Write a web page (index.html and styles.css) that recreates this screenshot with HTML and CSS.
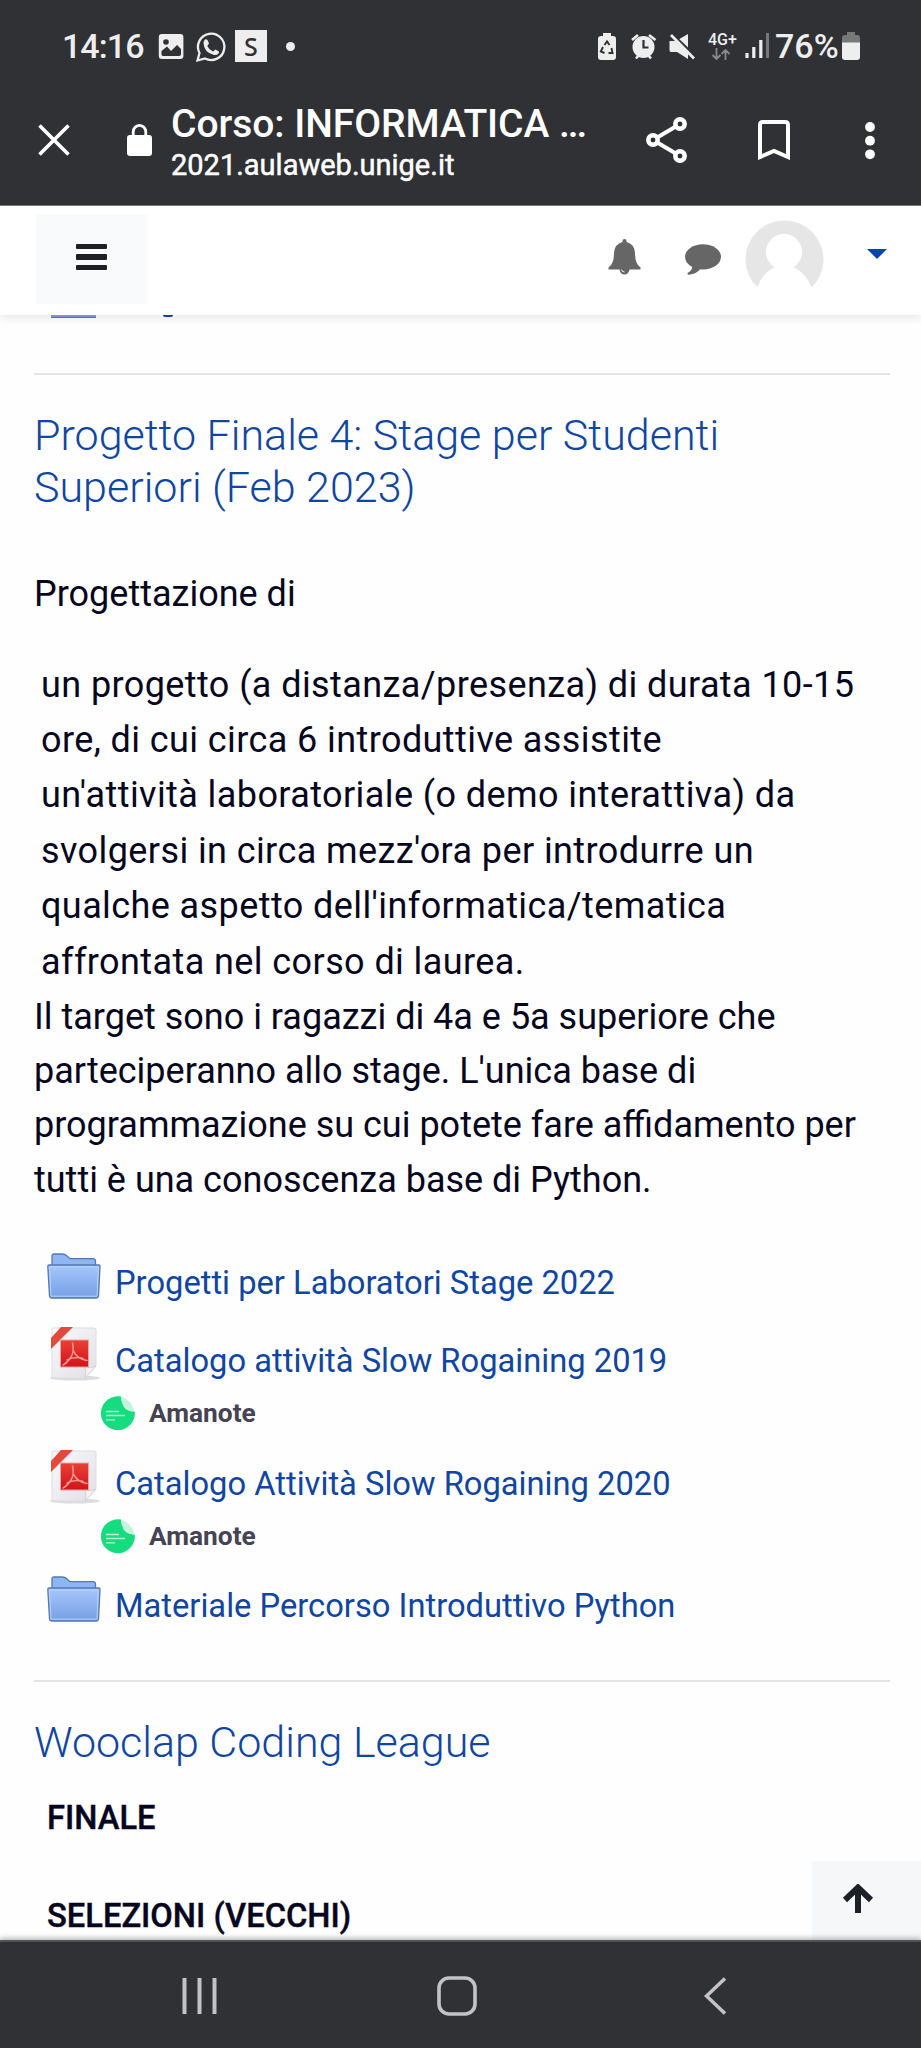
FILE: index.html
```html
<!DOCTYPE html>
<html lang="it">
<head>
<meta charset="utf-8">
<title>Corso: INFORMATICA</title>
<link rel="stylesheet" href="styles.css">
</head>
<body>
<svg class="defs" width="0" height="0" aria-hidden="true">
  <defs>
    <linearGradient id="fb" x1="0" y1="0" x2="0" y2="1"><stop offset="0" stop-color="#a6c7fa"/><stop offset="1" stop-color="#769fe6"/></linearGradient>
    <linearGradient id="pg" x1="0" y1="0" x2="1" y2="1"><stop offset="0" stop-color="#fafafc"/><stop offset="1" stop-color="#dfdfe6"/></linearGradient>
    <linearGradient id="rd" x1="0" y1="0" x2="0" y2="1"><stop offset="0" stop-color="#ea4034"/><stop offset="1" stop-color="#d0131c"/></linearGradient>
    <symbol id="folder" viewBox="0 0 54 46">
      <path d="M5 15V3Q5 1 7 1H15Q18 1 20 3L23 5.700H46Q48.500 6 48.500 8V15Z" fill="#8fb5f2" stroke="#5578b5" stroke-width="1.300"/>
      <path d="M2 12H52Q53 12 53 13.500L51.500 43Q51.300 45 49.500 45H4.500Q2.700 45 2.500 43L.8 13.500Q.8 12 2 12Z" fill="url(#fb)" stroke="#5578b5" stroke-width="1.300"/>
      <path d="M2.500 14H51.300L50 43.200H4Z" fill="none" stroke="#b9d2fb" stroke-width="1"/>
    </symbol>
    <symbol id="pdf" viewBox="0 0 52 54">
      <ellipse cx="26" cy="51" rx="25" ry="2.600" fill="#dcdcdf"/>
      <path d="M3 2Q3 1 5 1H45Q47 1 47 3V39L36 51H5Q3 51 3 49Z" fill="url(#pg)" stroke="#dddde3" stroke-width="1"/>
      <path d="M47 39L36 51Q38 44 36 40Q42 42 47 39Z" fill="#f4f4f5" stroke="#cbcbd0" stroke-width=".8"/>
      <path d="M12 0H24L2 22V11Z" fill="#e24a3d"/>
      <rect x="11.500" y="13" width="28" height="27" fill="url(#rd)" stroke="#eca49d" stroke-width="1"/>
      <path d="M23.500 16Q25.500 25 22 30Q18 36 14 38M24.500 24Q28 32 38 33.500M18 33Q26 29 34 31.500" fill="none" stroke="#f79a92" stroke-width="1.500" stroke-linecap="round"/>
    </symbol>
    <symbol id="amanote" viewBox="0 0 34 34">
      <path d="M20 .5A17 17 0 1 0 33.800 15.500Q21 16 20 .5Z" fill="#14dc7f"/>
      <path d="M20.500 .5Q30 4 33.800 15.500Q21 15 20.500 .5Z" fill="#c2f5dc"/>
      <path d="M5 15.500H18M5 19.500H24M5 23.800H14" stroke="#b4f5d5" stroke-width="1.300"/>
    </symbol>
  </defs>
</svg>

<header class="system">
  <div class="status">
    <span class="clock">14:16</span>
    <svg class="st-left" width="78" height="40" viewBox="150 26 78 40">
      <rect x="158.800" y="34" width="24.600" height="25" rx="3" fill="#eeeeee"/>
      <circle cx="166" cy="42" r="2.800" fill="#303134"/>
      <path d="M161.500 54V51L167 46.500L171 51L177 45L181 49V54Q181 56 179 56H163Q161.500 56 161.500 54Z" fill="#303134"/>
      <path d="M197.500 60.500L199.500 53A13.200 13.200 0 1 1 205 58.500Z" fill="none" stroke="#eeeeee" stroke-width="2.300"/>
      <path d="M205 39.500Q207 38.500 208 41L209 43.500L207.300 46Q209 50 213 51.500L215.500 49.500L219 51.500Q219 55.500 214 55Q204 52.500 203.500 43Q203.700 40.500 205 39.500Z" fill="#eeeeee"/>
    </svg>
    <span class="s-app">S</span>
    <i class="dot"></i>
    <svg class="st-right" width="106" height="40" viewBox="594 26 106 40">
      <path d="M603 33H611V36H613Q616 36 616 39V57Q616 60 613 60H601Q598 60 598 57V39Q598 36 601 36H603Z" fill="#eeeeee"/>
      <path d="M604.500 45L607 41.500L609.500 45M603 47L600.800 51.500L604.500 53M608.500 53H612.500L611.500 48" fill="none" stroke="#303134" stroke-width="1.900"/>
      <circle cx="643.500" cy="47" r="11" fill="#eeeeee"/>
      <path d="M632 40L638 35M649 35L655.500 40M636 58.500L639 55M651 58.500L648 55" stroke="#eeeeee" stroke-width="2.600"/>
      <path d="M643.500 40V47.500H648.500" fill="none" stroke="#303134" stroke-width="2.200"/>
      <path d="M669.500 41H676L688 34V59L677 52H671Q669.500 52 669.500 50Z" fill="#eeeeee"/>
      <path d="M670 33L695 57" stroke="#303134" stroke-width="4"/>
      <path d="M671 35L694 58.500" stroke="#eeeeee" stroke-width="2.700"/>
    </svg>
    <span class="net"><b>4G+</b>
      <svg width="20" height="13" viewBox="0 0 20 13"><path d="M5.500 0V11M1.500 7L5.500 11L9.500 7M14.500 12V2M10.500 6L14.500 2L18.500 6" fill="none" stroke="#8a8a8c" stroke-width="1.800"/></svg>
    </span>
    <svg class="signal" width="26" height="28" viewBox="744 32 26 28"><path d="M747 53V58M753.800 47V58M760.800 40V58" stroke="#eeeeee" stroke-width="3.200"/><path d="M767.500 33V58" stroke="#77787a" stroke-width="3"/></svg>
    <span class="pct">76%</span>
    <svg class="batt" width="18" height="28" viewBox="0 0 18 28"><path d="M5 0H13V3H15Q18 3 18 6V12H0V6Q0 3 3 3H5Z" fill="#77787a"/><path d="M0 10.500H18V25Q18 28 15 28H3Q0 28 0 25Z" fill="#eeeeee"/></svg>
  </div>
  <div class="browser">
    <svg class="close" width="32" height="32" viewBox="0 0 32 32"><path d="M1.500 1.500L30.500 30.500M30.500 1.500L1.500 30.500" stroke="#fff" stroke-width="3.600"/></svg>
    <svg class="lock" width="25" height="32" viewBox="0 0 25 32"><path d="M6.200 12V8A6.200 6.500 0 0 1 18.800 8V12" fill="none" stroke="#fff" stroke-width="2.800"/><rect y="11" width="25" height="21" rx="3" fill="#fff"/></svg>
    <div class="page-id">
      <div class="page-title">Corso: INFORMATICA <span class="ell">...</span></div>
      <div class="page-host">2021.aulaweb.unige.it</div>
    </div>
    <svg class="share" width="42" height="46" viewBox="0 0 42 46"><path d="M34 7L7 23L34 39" fill="none" stroke="#fff" stroke-width="4"/><g fill="#303134" stroke="#fff" stroke-width="4.500"><circle cx="34" cy="7" r="4.700"/><circle cx="7" cy="23" r="4.700"/><circle cx="34" cy="39" r="4.700"/></g></svg>
    <svg class="mark" width="32" height="40" viewBox="0 0 32 40"><path d="M2 37V5Q2 2 5 2H27Q30 2 30 5V37L16 31Z" fill="none" stroke="#fff" stroke-width="4"/></svg>
    <svg class="more" width="10" height="38" viewBox="0 0 10 38"><g fill="#fff"><circle cx="5" cy="5" r="4.900"/><circle cx="5" cy="18.700" r="4.900"/><circle cx="5" cy="32.300" r="4.900"/></g></svg>
  </div>
</header>

<nav class="site-nav">
  <div class="burger"><i></i><i></i><i></i></div>
  <svg class="bell" width="33" height="36" viewBox="0 0 33 36"><path d="M14.500 3V2A2 2 0 0 1 18.500 2V3Q26.500 5 27 14Q27 25 32.500 28.500V30.500H.5V28.500Q6 25 6 14Q6.500 5 14.500 3Z" fill="#666"/><path d="M11.500 30H21.500A5 5.500 0 0 1 11.500 30Z" fill="#666"/><path d="M13.500 30.500Q14 33 16.500 33" fill="none" stroke="#fff" stroke-width="1"/></svg>
  <svg class="chat" width="36" height="31" viewBox="0 0 36 31"><ellipse cx="18" cy="12.800" rx="18" ry="12.600" fill="#666"/><path d="M7 22Q8 26 2.500 29Q2 31 4 30.800Q12 30 16 24Z" fill="#666"/></svg>
  <svg class="avatar" width="79" height="69" viewBox="0 0 79 69"><path d="M13 69A39 39 0 1 1 66 69Z" fill="#e6e6e6"/><circle cx="39" cy="33" r="18" fill="#fff"/><path d="M12 69Q17 54 30 48H48Q61 54 67 69Z" fill="#fff"/></svg>
  <i class="caret"></i>
</nav>

<main class="content">
  <div class="clipped"><i class="clip-folder"></i><i class="clip-text"></i></div>
  <hr class="rule">
  <h3 class="title t1">Progetto Finale 4: Stage per Studenti<br>Superiori (Feb 2023)</h3>
  <p class="intro">Progettazione di</p>
  <div class="points">
    <div>un progetto (a distanza/presenza) di durata 10-15<br>ore, di cui circa 6 introduttive assistite</div>
    <div>un'attività laboratoriale (o demo interattiva) da<br>svolgersi in circa mezz'ora per introdurre un<br>qualche aspetto dell'informatica/tematica<br>affrontata nel corso di laurea.</div>
  </div>
  <p class="target">Il target sono i ragazzi di 4a e 5a superiore che<br>parteciperanno allo stage. L'unica base di<br>programmazione su cui potete fare affidamento per<br>tutti è una conoscenza base di Python.</p>
  <div class="activities">
    <div class="act first"><svg class="folder" width="54" height="46"><use href="#folder"/></svg><a>Progetti per Laboratori Stage 2022</a></div>
    <div class="act"><svg class="pdf" width="52" height="54"><use href="#pdf"/></svg><a>Catalogo attività Slow Rogaining 2019</a></div>
    <div class="sub"><svg width="34" height="34"><use href="#amanote"/></svg><span>Amanote</span></div>
    <div class="act"><svg class="pdf" width="52" height="54"><use href="#pdf"/></svg><a>Catalogo Attività Slow Rogaining 2020</a></div>
    <div class="sub"><svg width="34" height="34"><use href="#amanote"/></svg><span>Amanote</span></div>
    <div class="act last"><svg class="folder" width="54" height="46"><use href="#folder"/></svg><a>Materiale Percorso Introduttivo Python</a></div>
  </div>
  <hr class="rule">
  <h3 class="title t2">Wooclap Coding League</h3>
  <div class="label l1">FINALE</div>
  <div class="label l2">SELEZIONI (VECCHI)</div>
  <div class="to-top"><svg width="32" height="31" viewBox="0 0 32 31"><path d="M16 29V4M3 16L16 3.500L29 16" fill="none" stroke="#1d2125" stroke-width="6"/></svg></div>
</main>

<footer class="keys">
  <svg width="36" height="38" viewBox="0 0 36 38"><path d="M2.500 1V37M17.500 1V37M32.500 1V37" stroke="#c3c3c6" stroke-width="4"/></svg>
  <svg width="40" height="40" viewBox="0 0 40 40"><rect x="2" y="2" width="36" height="36" rx="10" fill="none" stroke="#c3c3c6" stroke-width="3.600"/></svg>
  <svg width="23" height="38" viewBox="0 0 23 38"><path d="M21 1.500L2.500 19L21 36.500" fill="none" stroke="#c3c3c6" stroke-width="3.600"/></svg>
</footer>
</body>
</html>
```
FILE: styles.css
```css
* { box-sizing: border-box; }
body { margin: 0; width: 921px; height: 2048px; overflow: hidden; display: flex; flex-direction: column; background: #fefefe; color: #06061f; font-family: Roboto, "Liberation Sans", sans-serif; font-size: 36px; }
svg { display: block; flex: none; }
.defs { position: absolute; }
h3, p, hr { margin: 0; }

.system { height: 206px; flex: none; background: #303134; border-bottom: 1px solid #77777a; color: #fff; }
.status { height: 92px; display: flex; align-items: center; padding-left: 62px; color: #eee; font-weight: 500; font-size: 34px; }
.clock { width: 88px; white-space: nowrap; letter-spacing: -.95px; }
.s-app { width: 32px; height: 32px; margin-left: 7px; background: #eee; color: #303134; font: 500 25px/32px "Noto Sans", sans-serif; text-align: center; }
.dot { width: 9px; height: 9px; margin-left: 19px; border-radius: 50%; background: #eee; }
.st-right { margin-left: 299px; }
.net { width: 36px; margin-left: 8px; height: 26px; }
.net b { display: block; font-size: 16px; line-height: 13px; font-weight: 500; }
.net svg { margin: 2px 0 0 3px; }
.pct { width: 66px; margin-left: 5px; white-space: nowrap; }
.batt { margin-left: 1px; }
.browser { height: 113px; display: flex; align-items: flex-start; }
.close { margin: 32px 0 0 38px; }
.lock { margin: 32px 0 0 57px; }
.page-id { width: 475px; margin: 9px 0 0 19px; white-space: nowrap; }
.page-title { font-size: 39px; line-height: 46px; font-weight: 500; letter-spacing: -.05px; }
.ell { letter-spacing: -2px; }
.page-host { font-size: 29px; line-height: 37px; font-weight: 400; -webkit-text-stroke: .5px #fff; }
.share { margin-top: 25px; }
.mark { margin: 28px 0 0 70px; }
.more { margin: 30px 0 0 75px; }

.site-nav { position: relative; z-index: 1; flex: none; height: 109px; display: flex; align-items: flex-start; background: #fff; box-shadow: 0 4px 8px rgba(0,0,0,.08); }
.burger { width: 111px; height: 90px; margin: 8px 0 0 36px; padding-top: 30px; display: flex; flex-direction: column; align-items: center; gap: 5px; background: #f9fafc; }
.burger i { width: 31px; height: 5.400px; border-radius: 1px; background: #1d1f24; }
.bell { margin: 33px 0 0 461px; }
.chat { margin: 38px 0 0 44px; }
.avatar { margin: 13px 0 0 24px; }
.caret { margin: 43px 0 0 43px; border: 10px solid transparent; border-top-color: #0644aa; border-bottom: 0; }

.content { flex: none; height: 1625px; overflow: hidden; padding: 0 31px 0 34px; }
.clipped { height: 58px; display: flex; align-items: flex-start; }
.clip-folder { width: 45px; height: 3px; margin-left: 17px; background: #7f9fdc; border-bottom: 1px solid #5578b5; }
.clip-text { width: 10px; height: 2px; margin-left: 67px; border-radius: 0 0 5px 5px; background: #1045a0; }
.rule { height: 2px; border: 0; background: #e3e4e5; }
.title { font-size: 43px; line-height: 52px; font-weight: 300; color: #1045a0; white-space: nowrap; }
.t1 { margin-top: 34px; }
.intro { margin-top: 53.500px; line-height: 54px; }
.points { margin-top: 37px; padding-left: 7px; line-height: 55.400px; letter-spacing: .41px; white-space: nowrap; }
.target { line-height: 54.200px; white-space: nowrap; }
.activities { height: 431px; margin-top: 42.500px; color: #1045a0; }
.act { display: flex; height: 60px; align-items: flex-start; font-size: 32.700px; line-height: 44px; white-space: nowrap; }
.act a { margin-top: 12px; }
.act.first { height: 78px; }
.folder { margin: 4px 14px 0 13px; }
.pdf { margin: 0 14px 0 15px; }
.sub { display: flex; height: 62.400px; padding: 9px 0 0 67px; align-items: flex-start; gap: 14px; color: #454354; font-size: 26.300px; line-height: 34px; font-weight: 700; }
.t2 { margin-top: 34px; }
.label { padding-left: 13px; font-size: 32.700px; line-height: 44px; font-weight: 500; -webkit-text-stroke: .4px #06061f; white-space: nowrap; }
.l1 { margin-top: 28px; }
.l2 { margin-top: 54px; }
.to-top { position: absolute; left: 812px; top: 1861px; width: 109px; height: 79px; display: flex; justify-content: center; padding: 23px 17px 0 0; background: #f6f7f9; }

.keys { flex: none; height: 108px; position: relative; background: #303134; border-top: 2px solid #515356; display: flex; align-items: center; padding: 2px 0 0 182px; box-shadow: 0 -2px 5px rgba(50,55,55,.35); }
.keys svg:nth-child(2) { margin-left: 219px; }
.keys svg:nth-child(3) { margin-left: 227px; }
```
